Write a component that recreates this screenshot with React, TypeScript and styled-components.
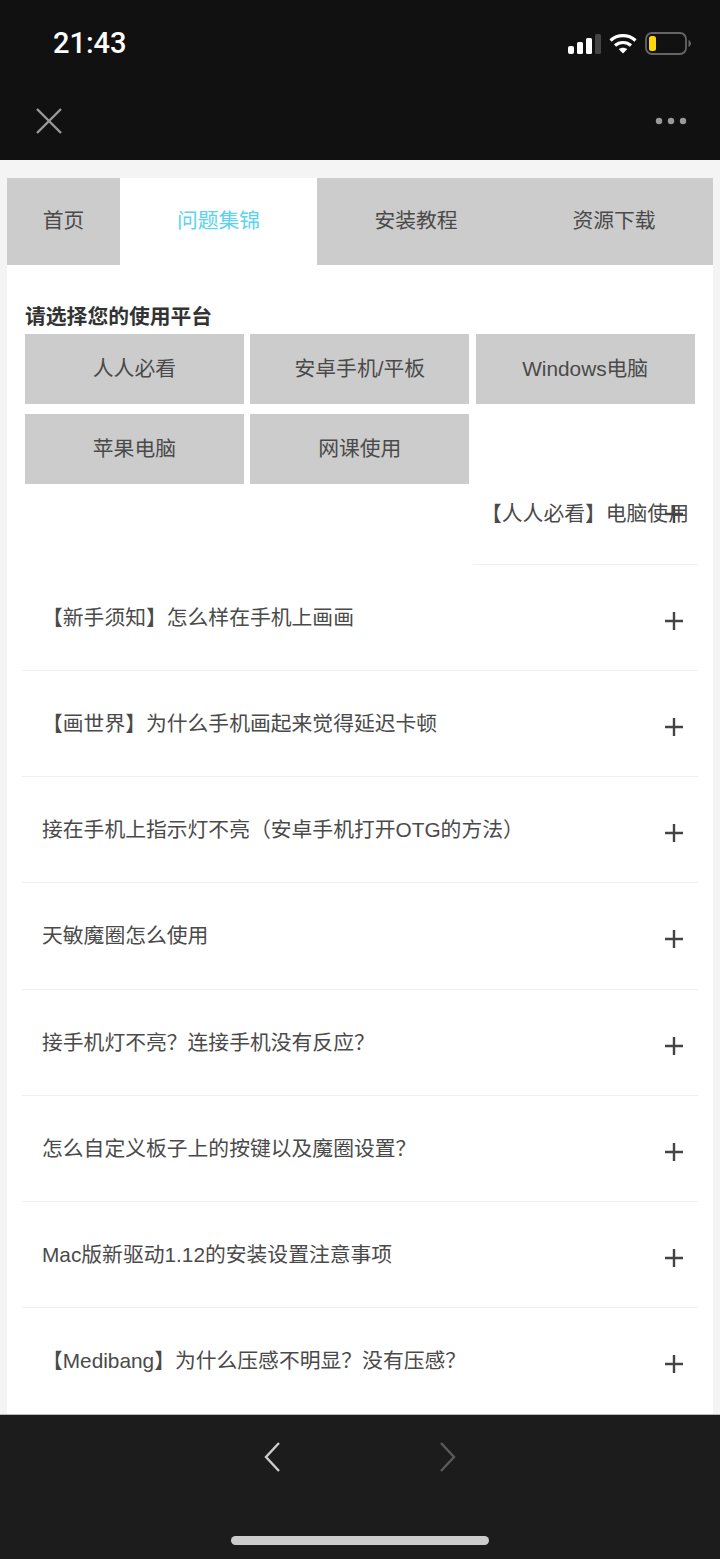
import React from 'react';
import styled, { createGlobalStyle } from 'styled-components';

const GlobalStyle = createGlobalStyle`
  html, body { margin: 0; padding: 0; background: #111; }
  * { box-sizing: border-box; }
  body { font-family: "Liberation Sans", "Noto Sans CJK SC", sans-serif; }
`;

const Page = styled.div`
  width: 720px;
  height: 1559px;
  display: flex;
  flex-direction: column;
  overflow: hidden;
`;

const TopBar = styled.header`
  height: 160px;
  background: #111;
  display: flex;
  flex-direction: column;
`;

const StatusRow = styled.div`
  height: 86px;
  padding: 0 29px 0 53px;
  display: flex;
  align-items: center;
  justify-content: space-between;
`;

const Clock = styled.span`
  font-family: Roboto, sans-serif;
  font-size: 29px;
  font-weight: 500;
  color: #fff;
`;

const StatusIcons = styled.div`
  display: flex;
  align-items: center;
  gap: 8px;
`;

const NavRow = styled.div`
  height: 70px;
  padding: 0 33px 0 35px;
  display: flex;
  align-items: center;
  justify-content: space-between;
`;

const Main = styled.main`
  flex: 1;
  background: #f4f4f4;
  padding: 18px 7px 0;
  overflow: hidden;
`;

const Sheet = styled.div`
  background: #fff;
  height: 100%;
`;

const Tabs = styled.nav`
  display: flex;
  height: 87px;
`;

const Tab = styled.div<{ $active?: boolean; $width: number }>`
  width: ${p => p.$width}px;
  display: flex;
  align-items: center;
  justify-content: center;
  padding-bottom: 5px;
  font-size: 20.8px;
  color: ${p => (p.$active ? '#5cd3f0' : '#4a4a4a')};
  background: ${p => (p.$active ? '#fff' : '#ccc')};
`;

const Body = styled.section`
  padding: 38px 15px 0;
`;

const Heading = styled.h2`
  margin: 0 0 3px 3px;
  font-size: 20.8px;
  line-height: 28px;
  font-weight: 700;
  color: #333;
`;

const PlatformGrid = styled.div`
  margin-left: 3px;
  width: 670px;
  display: grid;
  grid-template-columns: repeat(3, 218.8px);
  grid-auto-rows: 70px;
  column-gap: 6.6px;
  row-gap: 10px;
`;

const Platform = styled.div`
  background: #ccc;
  color: #4a4a4a;
  font-size: 20.8px;
  padding-bottom: 4px;
  display: flex;
  align-items: center;
  justify-content: center;
`;

const Faq = styled.div`
  display: flex;
  flex-direction: column;
`;

const FaqRow = styled.div<{ $first?: boolean }>`
  position: relative;
  flex: none;
  height: ${p => (p.$first ? '81px' : '106.15px')};
  width: ${p => (p.$first ? '225px' : 'auto')};
  align-self: ${p => (p.$first ? 'flex-end' : 'stretch')};
  padding: ${p => (p.$first ? '16px 0 0 8px' : '39px 0 0 20px')};
  border-bottom: 1.5px solid #f0f0f0;
  font-size: 20.8px;
  line-height: 28px;
  color: #4a4a4a;
  white-space: nowrap;

  &:last-child {
    border-bottom: none;
  }
`;

const PlusMark = styled.svg<{ $first?: boolean }>`
  position: absolute;
  right: 15px;
  top: ${p => (p.$first ? 21 : 47)}px;
  width: 18px;
  height: 18px;
`;

const BottomBar = styled.footer`
  height: 145px;
  background: #1c1c1c;
  border-top: 1.5px solid #bbb;
  display: flex;
  flex-direction: column;
  align-items: center;
`;

const NavArrows = styled.div`
  height: 121px;
  padding-bottom: 38px;
  display: flex;
  align-items: center;
  gap: 160px;
`;

const HomeBar = styled.div`
  width: 258px;
  height: 9px;
  border-radius: 5px;
  background: #ccc;
`;

const tabs = [
  { label: '首页', width: 113 },
  { label: '问题集锦', width: 197, active: true },
  { label: '安装教程', width: 198 },
  { label: '资源下载', width: 198 },
];

const platforms = ['人人必看', '安卓手机/平板', 'Windows电脑', '苹果电脑', '网课使用'];

const questions = [
  '【人人必看】电脑使用',
  '【新手须知】怎么样在手机上画画',
  '【画世界】为什么手机画起来觉得延迟卡顿',
  '接在手机上指示灯不亮（安卓手机打开OTG的方法）',
  '天敏魔圈怎么使用',
  '接手机灯不亮？连接手机没有反应？',
  '怎么自定义板子上的按键以及魔圈设置？',
  'Mac版新驱动1.12的安装设置注意事项',
  '【Medibang】为什么压感不明显？没有压感？',
];

const Signal = () => (
  <svg width="33" height="21" viewBox="0 0 33 21">
    <rect x="0" y="13" width="6" height="8" rx="2" fill="#fff" />
    <rect x="9" y="9" width="6" height="12" rx="1.5" fill="#fff" />
    <rect x="18" y="5" width="6" height="16" rx="1.5" fill="#fff" />
    <rect x="27" y="1" width="6" height="20" rx="1.5" fill="#444" />
  </svg>
);

const Wifi = () => (
  <svg width="28" height="21" viewBox="0 0 28 21" fill="none" stroke="#fff" strokeWidth="3.2">
    <path d="M1.5 7.5C8.5 1 19.5 1 26.5 7.5" />
    <path d="M6 12.5C10.5 8.5 17.5 8.5 22 12.5" />
    <path d="M14 20.5L9.8 16.3C12 14.3 16 14.3 18.2 16.3Z" fill="#fff" stroke="none" />
  </svg>
);

const Battery = () => (
  <svg width="46" height="23" viewBox="0 0 46 23">
    <rect x="1" y="1" width="40" height="21" rx="6" fill="none" stroke="#666" strokeWidth="1.8" />
    <rect x="4" y="4" width="7" height="15" rx="2.5" fill="#ffd60a" />
    <path d="M43.5 8v7c1.5-.6 2.5-2 2.5-3.5S45 8.6 43.5 8z" fill="#666" />
  </svg>
);

const App = () => (
  <Page>
    <GlobalStyle />
    <TopBar>
      <StatusRow>
        <Clock>21:43</Clock>
        <StatusIcons>
          <Signal />
          <Wifi />
          <Battery />
        </StatusIcons>
      </StatusRow>
      <NavRow>
        <svg width="28" height="28" viewBox="0 0 28 28" stroke="#999" strokeWidth="2.4">
          <path d="M2 2L26 26M26 2L2 26" />
        </svg>
        <svg width="32" height="8" viewBox="0 0 32 8" fill="#999">
          <circle cx="4" cy="4" r="3.2" />
          <circle cx="16" cy="4" r="3.2" />
          <circle cx="28" cy="4" r="3.2" />
        </svg>
      </NavRow>
    </TopBar>
    <Main>
      <Sheet>
        <Tabs>
          {tabs.map(t => (
            <Tab key={t.label} $width={t.width} $active={t.active}>{t.label}</Tab>
          ))}
        </Tabs>
        <Body>
          <Heading>请选择您的使用平台</Heading>
          <PlatformGrid>
            {platforms.map(p => <Platform key={p}>{p}</Platform>)}
          </PlatformGrid>
          <Faq>
            {questions.map((q, i) => (
              <FaqRow key={q} $first={i === 0}>
                {q}
                <PlusMark $first={i === 0} viewBox="0 0 18 18" stroke="#444" strokeWidth="2.4">
                  <path d="M9 0V18M0 9H18" />
                </PlusMark>
              </FaqRow>
            ))}
          </Faq>
        </Body>
      </Sheet>
    </Main>
    <BottomBar>
      <NavArrows>
        <svg width="16" height="30" viewBox="0 0 16 30" fill="none" stroke="#ccc" strokeWidth="2.4">
          <path d="M15 1L2 15L15 29" />
        </svg>
        <svg width="16" height="30" viewBox="0 0 16 30" fill="none" stroke="#5a5a5a" strokeWidth="2.4">
          <path d="M1 1L14 15L1 29" />
        </svg>
      </NavArrows>
      <HomeBar />
    </BottomBar>
  </Page>
);

export default App;
